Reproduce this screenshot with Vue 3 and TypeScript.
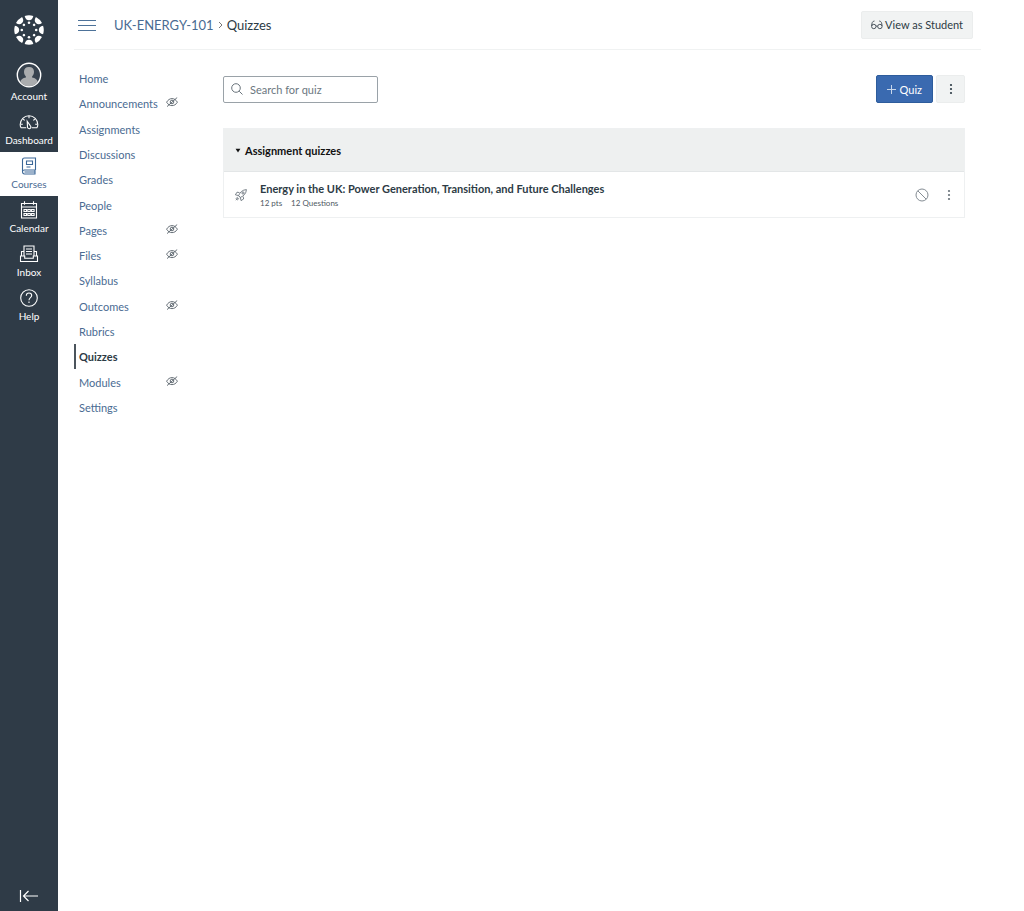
<script setup lang="ts">
import { ref } from 'vue'

interface NavItem {
  label: string
  hidden?: boolean
}

const courseNav: NavItem[] = [
  { label: 'Home' },
  { label: 'Announcements', hidden: true },
  { label: 'Assignments' },
  { label: 'Discussions' },
  { label: 'Grades' },
  { label: 'People' },
  { label: 'Pages', hidden: true },
  { label: 'Files', hidden: true },
  { label: 'Syllabus' },
  { label: 'Outcomes', hidden: true },
  { label: 'Rubrics' },
  { label: 'Quizzes' },
  { label: 'Modules', hidden: true },
  { label: 'Settings' },
]
const current = 'Quizzes'
const search = ref('')
const expanded = ref(true)
const spokes = [0, 45, 90, 135, 180, 225, 270, 315]
</script>

<template>
  <div class="app">
    <nav class="global" aria-label="Global navigation">
      <a class="logo" href="#" aria-label="Home page">
        <svg width="30" height="30" viewBox="-15 -15 30 30" fill="#fff">
          <g v-for="a in spokes" :key="a" :transform="`rotate(${a})`">
            <path d="M-4.3 -14.1 A14.8 14.8 0 0 1 4.3 -14.1 C3.8 -11.3 2.2 -9.8 0 -9.8 C-2.2 -9.8 -3.8 -11.3 -4.3 -14.1Z" />
            <circle cx="0" cy="-7.2" r="1.3" />
          </g>
        </svg>
      </a>
      <a class="item account" href="#">
        <svg width="26" height="26" viewBox="0 0 26 26">
          <circle cx="13" cy="13" r="11.7" fill="#37424e" stroke="#fff" stroke-width="1.4" />
          <path d="M13 5c3.400 0 5 2 5 4.800c0 2.200-.8 3.700-1.900 4.700v1.100c3 .7 5.200 1.700 5.600 4.300a10.800 10.800 0 0 1-17.400 0c.4-2.600 2.600-3.600 5.600-4.300v-1.100c-1.100-1-1.900-2.500-1.900-4.700C8 7 9.600 5 13 5z" fill="#aaacae" />
        </svg>
        <span>Account</span>
      </a>
      <a class="item" href="#">
        <svg width="20" height="20" viewBox="0 0 20 20" fill="none" stroke="#fff" stroke-width="1.1">
          <path d="M7.200 15.800H2.100C1.500 14.900 1.200 13.800 1.200 12.500a8.800 8.800 0 0 1 17.600 0c0 1.300-.3 2.400-.9 3.300h-5.100" />
          <path d="M8.200 9.200l3.200 4.600a1.700 1.700 0 1 1-2.900 1.200zM10 4v2.200M4.200 7.200l1.500 1.200M15.800 7.200l-1.500 1.200M1.800 12.300h2M18.200 12.300h-2" />
        </svg>
        <span>Dashboard</span>
      </a>
      <a class="item active" href="#" aria-current="true">
        <svg width="20" height="20" viewBox="0 0 20 20" fill="none" stroke="#3b6797" stroke-width="1.1">
          <path d="M16.500 14V2H5.500C4.200 2 3.500 2.900 3.500 4v11.500c0 1.500.8 2.500 2 2.500h11M3.500 15.500c0-1 .8-1.500 2-1.500h11M16 14v4M5.500 16h10.500" />
          <path d="M7.500 5h6v3.500h-6zM7.500 11h4" />
        </svg>
        <span>Courses</span>
      </a>
      <a class="item" href="#">
        <svg width="20" height="20" viewBox="0 0 20 20" fill="none" stroke="#fff" stroke-width="1.1">
          <path d="M2.500 3.500h15v14.500h-15zM2.500 7h15M5.500 1.200v3.500M14.500 1.200v3.500" />
          <path d="M5 9.500h2.500v2H5zM8.800 9.500h2.500v2H8.800zM12.600 9.500h2.500v2h-2.500zM5 13.500h2.500v2H5zM8.800 13.500h2.500v2H8.800zM12.600 13.500h2.500v2h-2.500z" />
        </svg>
        <span>Calendar</span>
      </a>
      <a class="item" href="#">
        <svg width="20" height="20" viewBox="0 0 20 20" fill="none" stroke="#fff" stroke-width="1.1">
          <path d="M5 12V2h10v10M5 7.500H2.500V12M15 7.500h2.500V12M1.500 12h4.200v2.300h8.600V12h4.200v5.500h-17zM7 5h6M7 7.500h6M7 10h6" />
        </svg>
        <span>Inbox</span>
      </a>
      <a class="item" href="#">
        <svg width="20" height="20" viewBox="0 0 20 20" fill="none" stroke="#fff" stroke-width="1.1">
          <circle cx="10" cy="10" r="8.3" />
          <path d="M7.300 7.800C7.300 6 8.400 5 10 5s2.700 1 2.700 2.600c0 2-2.700 2.200-2.700 4.600M10 13.500v1.500" />
        </svg>
        <span>Help</span>
      </a>
      <button class="collapse" type="button" aria-label="Minimize global navigation">
        <svg width="20" height="14" viewBox="0 0 20 14" fill="none" stroke="#fff" stroke-width="1.2">
          <path d="M1.500 1v12M4.500 7H19M9.500 2l-5 5 5 5" />
        </svg>
      </button>
    </nav>

    <div class="page">
      <header class="top">
        <button class="burger" type="button" aria-label="Toggle course menu">
          <svg width="18" height="12" viewBox="0 0 18 12" stroke="#4d7299" stroke-width="1">
            <path d="M0 1.500h18M0 6.500h18M0 11.500h18" />
          </svg>
        </button>
        <div class="crumbs">
          <a href="#">UK-ENERGY-101</a>
          <svg width="5" height="8" viewBox="0 0 5 8" fill="none" stroke="#777" stroke-width="1"><path d="M1 1l3 3-3 3" /></svg>
          <span>Quizzes</span>
        </div>
        <button class="btn student" type="button">
          <svg width="12" height="10" viewBox="0 0 12 10" fill="none" stroke="#3d4852" stroke-width="0.9">
            <circle cx="2.8" cy="6.5" r="2.2" />
            <circle cx="8.9" cy="6.5" r="2.2" />
            <path d="M.7 6C.7 3 1.500 1 3.500 1M11 6C11 3 10.200 1 8.200 1M5 6.100h1.700" />
          </svg>
          View as Student
        </button>
      </header>

      <div class="body">
        <nav aria-label="Course navigation">
          <ul class="course">
            <li v-for="item in courseNav" :key="item.label" :class="{ current: item.label === current }">
              <a href="#">{{ item.label }}</a>
              <svg v-if="item.hidden" width="12" height="10" viewBox="0 0 12 10" fill="none" stroke="#566069" stroke-width="0.9" role="img" aria-label="Not visible to students">
                <path d="M.6 5.200C2 2.800 3.900 1.600 6 1.600s4 1.200 5.400 3.600C10 7.600 8.100 8.600 6 8.600S2 7.600.6 5.200zM1 9.600L11.200.5" />
                <circle cx="6" cy="5" r="1.8" />
              </svg>
            </li>
          </ul>
        </nav>

        <main>
          <div class="tools">
            <label class="search">
              <svg width="12" height="12" viewBox="0 0 12 12" fill="none" stroke="#6a747c" stroke-width="1">
                <circle cx="5" cy="5" r="4.3" />
                <path d="M8.200 8.200l3.300 3.300" />
              </svg>
              <input v-model="search" type="text" placeholder="Search for quiz" aria-label="Search for quiz" />
            </label>
            <button class="btn primary" type="button">
              <svg width="9" height="9" viewBox="0 0 9 9" stroke="#c9d7ea" stroke-width="1"><path d="M0 4.500h9M4.500 0v9" /></svg>
              Quiz
            </button>
            <button class="btn more" type="button" aria-label="More options">
              <svg width="4" height="12" viewBox="0 0 4 12" fill="#2d3b45"><circle cx="2" cy="2" r="1.1" /><circle cx="2" cy="6" r="1.1" /><circle cx="2" cy="10" r="1.1" /></svg>
            </button>
          </div>

          <section class="group">
            <h2>
              <button type="button" :aria-expanded="expanded" @click="expanded = !expanded">
                <svg width="6" height="5" viewBox="0 0 6 5" fill="#111"><path d="M.6.8h4.800L3 4.500z" /></svg>
                Assignment quizzes
              </button>
            </h2>
            <div v-if="expanded" class="quiz">
              <svg class="rocket" width="12" height="12" viewBox="0 0 12 12" fill="none" stroke="#5b656e" stroke-width="0.8">
                <path d="M3.600 6.600C5 3.200 7.500.8 11.400.6c-.2 3.900-2.600 6.400-6 7.800zM4.500 3.600L2 3.200.4 5.800l3.200.8M8.200 7.500l.4 2.500-2.600 1.600-.6-3.200M3 7.700L.8 9.900M4.300 9L2.100 11.200M2.800 9.200l-2 2" />
                <circle cx="8" cy="4" r="1.1" />
              </svg>
              <div class="info">
                <a href="#">Energy in the UK: Power Generation, Transition, and Future Challenges</a>
                <div class="meta"><span>12 pts</span><span>12 Questions</span></div>
              </div>
              <button class="icon" type="button" aria-label="Unpublished">
                <svg width="14" height="14" viewBox="0 0 14 14" fill="none" stroke="#858d94" stroke-width="1"><circle cx="7" cy="7" r="6" /><path d="M2.800 2.800l8.400 8.400" /></svg>
              </button>
              <button class="icon" type="button" aria-label="Quiz options">
                <svg width="4" height="12" viewBox="0 0 4 12" fill="#68727a"><circle cx="2" cy="2" r="1.1" /><circle cx="2" cy="6" r="1.1" /><circle cx="2" cy="10" r="1.1" /></svg>
              </button>
            </div>
          </section>
        </main>
      </div>
    </div>
  </div>
</template>

<style>
body {
  margin: 0;
  background: #fff;
}
</style>

<style scoped>
* {
  box-sizing: border-box;
}
.app {
  display: flex;
  min-height: 100vh;
  font-family: Lato, "Liberation Sans", sans-serif;
  font-size: 11px;
  color: #2d3b45;
}
a {
  color: #4a6b92;
  text-decoration: none;
}
button {
  font: inherit;
  color: inherit;
  border: 0;
  padding: 0;
  background: none;
  cursor: pointer;
}
svg {
  display: block;
  flex: none;
}
.global {
  display: flex;
  flex-direction: column;
  flex: none;
  width: 58px;
  background: #2f3b47;
}
.logo {
  display: flex;
  justify-content: center;
  padding: 15px 0 14px;
}
.item {
  display: flex;
  flex-direction: column;
  align-items: center;
  justify-content: flex-end;
  gap: 1px;
  height: 44px;
  padding-bottom: 5px;
  font-size: 10px;
  line-height: 14px;
  color: #fff;
}
.account {
  height: 49px;
}
.active {
  background: #fff;
  color: #4a6b92;
}
.collapse {
  display: flex;
  justify-content: center;
  margin-top: auto;
  padding: 8px 0;
}
.page {
  flex: 1;
  min-width: 0;
  padding: 0 43px 0 16px;
}
.top {
  display: flex;
  align-items: center;
  height: 50px;
  padding-right: 8px;
  border-bottom: 1px solid #f0f2f2;
}
.burger {
  padding: 4px;
}
.crumbs {
  display: flex;
  align-items: center;
  gap: 7px;
  margin-left: 14px;
  font-size: 12px;
  line-height: 18px;
}
.crumbs a,
.crumbs span {
  font-size: 13px;
}
.crumbs {
  gap: 4px;
}
.btn {
  display: flex;
  align-items: center;
  justify-content: center;
  height: 28px;
  border: 1px solid #ebeded;
  border-radius: 2px;
  background: #f1f3f3;
}
.student {
  gap: 2px;
  margin-left: auto;
  padding: 0 9px;
}
.body {
  display: flex;
  padding: 16px 16px 0 0;
}
.course {
  display: flex;
  flex-direction: column;
  width: 104px;
  min-height: 354px;
  margin: 0;
  padding: 0;
  list-style: none;
}
.course li {
  display: flex;
  flex: 1;
  align-items: center;
  justify-content: space-between;
  padding-left: 5px;
}
.course svg {
  margin-bottom: 3px;
}
.course .current {
  border-left: 2px solid #4b545c;
  padding-left: 3px;
}
.current a {
  font-weight: 700;
  color: #2d3b45;
}
main {
  flex: 1;
  min-width: 0;
  margin-left: 45px;
  padding-top: 9px;
}
.tools {
  display: flex;
  align-items: center;
  gap: 3px;
}
.search {
  display: flex;
  align-items: center;
  gap: 7px;
  width: 155px;
  height: 27px;
  margin-right: auto;
  padding: 0 7px;
  border: 1px solid #9aa2a8;
  border-radius: 2px;
}
.search input {
  flex: 1;
  min-width: 0;
  padding: 0;
  border: 0;
  outline: 0;
  background: none;
  font: inherit;
  color: inherit;
}
.search input::placeholder {
  color: #6b7780;
  opacity: 1;
}
.primary {
  gap: 4px;
  padding: 0 10px;
  border-color: #2d5c9c;
  background: #3a6ab0;
  color: #fff;
}
.more {
  width: 29px;
}
.group {
  margin-top: 25px;
  border: 1px solid #eef0f1;
}
.group h2 {
  margin: 0;
  background: #eef0f0;
  border-bottom: 1px solid #e3e6e7;
  font-size: 11px;
}
.group h2 button {
  display: flex;
  align-items: center;
  gap: 4px;
  width: 100%;
  height: 42px;
  padding: 0 11px;
  color: #111;
}
.quiz {
  display: flex;
  align-items: center;
  min-height: 45px;
  padding: 0 9px 0 11px;
}
.info {
  flex: 1;
  min-width: 0;
  margin-left: 13px;
}
.info a {
  display: block;
  font-weight: 700;
  line-height: 16px;
  color: #2d3b45;
}
.meta {
  display: flex;
  gap: 9px;
  font-size: 8px;
  line-height: 12px;
  color: #4f5a63;
}
.icon {
  display: flex;
  justify-content: center;
  min-width: 12px;
  margin-left: 14px;
}
</style>
